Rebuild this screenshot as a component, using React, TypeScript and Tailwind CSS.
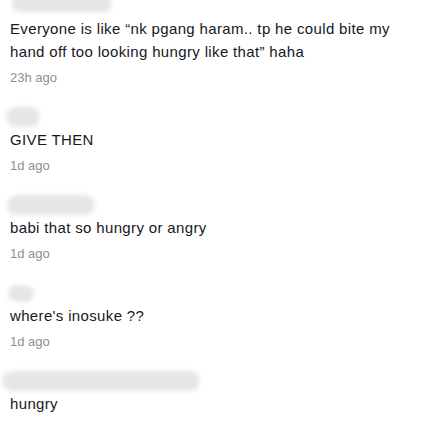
const comments = [
  {
    blob: "w-[100px] h-[16px] ml-[2px] -mt-[4px]",
    lines: [
      "Everyone is like “nk pgang haram.. tp he could bite my",
      "hand off too looking hungry like that” haha",
    ],
    time: "23h ago",
  },
  { blob: "w-[34px] h-[20px] -ml-[4px]", lines: ["GIVE THEN"], time: "1d ago" },
  { blob: "w-[88px] h-[20px] -ml-[3px]", lines: ["babi that so hungry or angry"], time: "1d ago" },
  { blob: "w-[26px] h-[17px] -ml-[2px]", lines: ["where's inosuke ??"], time: "1d ago" },
  { blob: "w-[198px] h-[20px] -ml-[8px]", lines: ["hungry"], time: "" },
];

export default function App() {
  return (
    <div
      className="w-[437px] h-[424px] overflow-hidden bg-white pl-[10px]"
      style={{ fontFamily: '"Liberation Sans", Arial, sans-serif' }}
    >
      {comments.map((c, i) => (
        <div key={i} className={i === 0 ? "" : "mt-[19px]"}>
          {/* blurred username */}
          <div className={`${i === 0 ? "h-[17px] items-start" : "h-[22px] items-center"} flex`}>
            <div className={`${c.blob} rounded-full bg-[#e6e6e6] blur-[2px]`} />
          </div>
          <div className="text-[15px] leading-[23px] tracking-[0.35px] text-[#161823]">
            {c.lines.map((l) => (
              <div key={l}>{l}</div>
            ))}
          </div>
          {c.time && (
            <div className="mt-[6px] text-[13px] leading-[18px] text-[#8e8f94]">{c.time}</div>
          )}
        </div>
      ))}
    </div>
  );
}
